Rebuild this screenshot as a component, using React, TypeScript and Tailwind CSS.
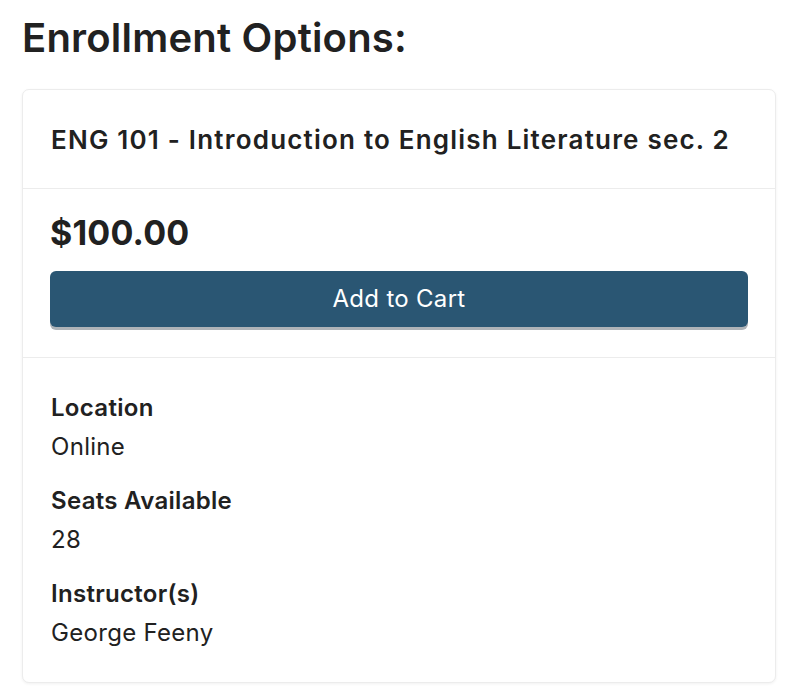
export default function App() {
  const details = [
    { label: "Location", value: "Online" },
    { label: "Seats Available", value: "28" },
    { label: "Instructor(s)", value: "George Feeny" },
  ];

  return (
    <div className="min-h-screen bg-white px-[22px] pt-[14px] text-[#212121] font-['Inter','Liberation_Sans',sans-serif]">
      <h1 className="text-[40px] leading-[48px] font-semibold tracking-[0.2px]">Enrollment Options:</h1>

      <div className="mt-[27px] rounded-[7px] border border-[#ececec] bg-white shadow-[0_1px_3px_rgba(0,0,0,0.06)]">
        {/* Header */}
        <div className="flex h-[99px] items-center border-b border-[#ececec] px-[28px]">
          <h2 className="text-[26px] font-semibold tracking-[1.2px]">ENG 101 - Introduction to English Literature sec. 2</h2>
        </div>

        {/* Price + action */}
        <div className="border-b border-[#ececec] px-[27px] pb-[30px] pt-[24px]">
          <p className="text-[34px] leading-[40px] font-bold tracking-[0.2px]">$100.00</p>
          <button className="mt-[18px] h-[56px] w-full rounded-[6px] bg-[#2a5673] text-[24px] tracking-[0.3px] text-white shadow-[0_3px_0_#aeb3b8]">
            Add to Cart
          </button>
        </div>

        {/* Details */}
        <div className="flex flex-col gap-[15px] px-[28px] pb-[30px] pt-[30px]">
          {details.map((d) => (
            <div key={d.label} className="text-[24px] leading-[39px] tracking-[0.3px]">
              <p className="font-semibold">{d.label}</p>
              <p>{d.value}</p>
            </div>
          ))}
        </div>
      </div>
    </div>
  );
}
